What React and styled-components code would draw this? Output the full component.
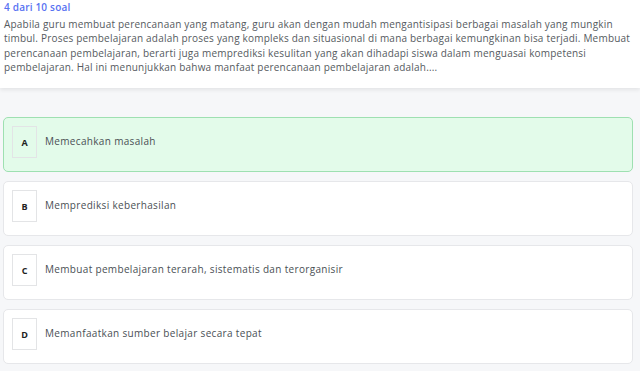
import styled, { createGlobalStyle } from 'styled-components'

const GlobalStyle = createGlobalStyle`
  * { box-sizing: border-box; }
  html, body {
    margin: 0;
    padding: 0;
    background: #f6f7f9;
    font-family: 'Open Sans', 'Noto Sans', sans-serif;
  }
`

const options = [
  { key: 'A', text: 'Memecahkan masalah', picked: true },
  { key: 'B', text: 'Memprediksi keberhasilan' },
  { key: 'C', text: 'Membuat pembelajaran terarah, sistematis dan terorganisir' },
  { key: 'D', text: 'Memanfaatkan sumber belajar secara tepat' },
]

function App() {
  return (
    <Page>
      <GlobalStyle />
      <QuestionCard>
        <Counter>4 dari 10 soal</Counter>
        <Question>
          Apabila guru membuat perencanaan yang matang, guru akan dengan mudah
          mengantisipasi berbagai masalah yang mungkin
          <br />
          timbul. Proses pembelajaran adalah proses yang kompleks dan
          situasional di mana berbagai kemungkinan bisa terjadi. Membuat
          <br />
          perencanaan pembelajaran, berarti juga memprediksi kesulitan yang
          akan dihadapi siswa dalam menguasai kompetensi
          <br />
          pembelajaran. Hal ini menunjukkan bahwa manfaat perencanaan
          pembelajaran adalah....
        </Question>
      </QuestionCard>
      <OptionList>
        {options.map((item) => (
          <Option key={item.key} $picked={item.picked}>
            <Letter>{item.key}</Letter>
            <OptionText>{item.text}</OptionText>
          </Option>
        ))}
      </OptionList>
    </Page>
  )
}

const Page = styled.main`
  width: 640px;
  height: 371px;
  overflow: hidden;
`

const QuestionCard = styled.section`
  background: #fff;
  padding: 1px 3px 8px 4px;
  height: 88px;
  box-shadow: 0 2px 4px rgba(0, 0, 0, 0.08);
`

const Counter = styled.h2`
  margin: 0;
  font-size: 10px;
  line-height: 12px;
  font-weight: 600;
  letter-spacing: 0.2px;
  color: #5872f2;
`

const Question = styled.p`
  margin: 4px 0 0;
  font-size: 10px;
  line-height: 14.3px;
  letter-spacing: 0.2px;
  color: #555a60;
`

const OptionList = styled.div`
  display: flex;
  flex-direction: column;
  gap: 9px;
  padding: 29px 7px 0 3px;
`

const Option = styled.div`
  height: 55px;
  display: flex;
  align-items: flex-start;
  gap: 8px;
  padding: 8px 8px 0 8px;
  border-radius: 5px;
  border: 1px solid ${(p) => (p.$picked ? '#9ee0b1' : '#e6e7ea')};
  background: ${(p) => (p.$picked ? '#e3fbea' : '#fff')};
`

const Letter = styled.span`
  width: 25px;
  height: 32px;
  flex: none;
  display: grid;
  place-items: center;
  border: 1px solid #e3e4e6;
  font-size: 9px;
  font-weight: 700;
  color: #222;
`

const OptionText = styled.span`
  font-size: 10px;
  line-height: 30px;
  letter-spacing: 0.33px;
  color: #4a4f55;
`

export default App
